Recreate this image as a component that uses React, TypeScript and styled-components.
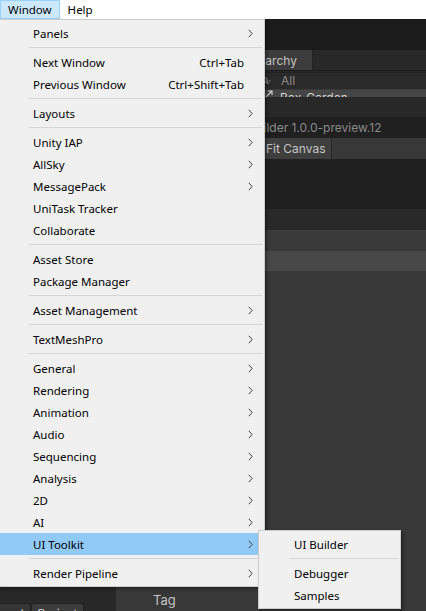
import React from 'react';
import styled, { createGlobalStyle } from 'styled-components';

const GlobalStyle = createGlobalStyle`
	html, body {
		margin: 0;
		padding: 0;
		background: #383838;
	}
	body {
		width: 426px;
		height: 611px;
		overflow: hidden;
	}
`;

const Screen = styled.div`
	position: relative;
	width: 426px;
	height: 611px;
	display: flex;
	flex-direction: column;
	overflow: hidden;
`;

/* ---------- native menu bar ---------- */

const MenuBar = styled.div`
	height: 19px;
	flex-shrink: 0;
	display: flex;
	background: #ffffff;
	font-family: 'Segoe UI', 'Noto Sans', sans-serif;
	font-size: 11.5px;
`;

const MenuBarItem = styled.div<{ $open?: boolean }>`
	box-sizing: border-box;
	height: 19px;
	padding: 0 7px;
	display: flex;
	align-items: center;
	color: #000;
	background: ${(p) => (p.$open ? '#cce8ff' : 'transparent')};
	border: 1px solid ${(p) => (p.$open ? '#99d1ff' : 'transparent')};
`;

/* ---------- editor behind the menu ---------- */

const Editor = styled.div`
	flex: 1;
	display: flex;
	flex-direction: column;
	min-height: 0;
	font-family: Inter, 'Noto Sans', sans-serif;
	font-size: 12px;
	color: #c4c4c4;
`;

const MainToolbar = styled.div`
	height: 31px;
	flex-shrink: 0;
	background: #1b1b1b;
`;

const Dock = styled.div`
	flex: 1;
	display: flex;
	min-height: 0;
`;

const ProjectDock = styled.div`
	width: 116px;
	flex-shrink: 0;
	background: #282828;
	display: flex;
	flex-direction: column;
	justify-content: flex-end;
`;

const DockTabs = styled.div`
	display: flex;
	height: 20px;
	margin-left: -17px;
	margin-bottom: -12px;
`;

const DockTab = styled.div<{ $active?: boolean }>`
	box-sizing: border-box;
	height: 20px;
	padding: 0 6px;
	display: flex;
	align-items: center;
	background: ${(p) => (p.$active ? '#3c3c3c' : '#353535')};
	border: 1px solid #232323;
	border-bottom: none;
	border-radius: 3px 3px 0 0;
	color: #c4c4c4;
`;

const RightDock = styled.div`
	flex: 1;
	display: flex;
	flex-direction: column;
	min-width: 0;
`;

const UpperSplit = styled.div`
	display: flex;
`;

const SceneGap = styled.div`
	width: 117px;
	flex-shrink: 0;
	background: #282828;
`;

const BuilderPanel = styled.div`
	flex: 1;
	display: flex;
	flex-direction: column;
	min-width: 0;
`;

const Band = styled.div<{ $h: number; $bg: string }>`
	box-sizing: border-box;
	height: ${(p) => p.$h}px;
	flex-shrink: 0;
	background: ${(p) => p.$bg};
	display: flex;
	align-items: center;
	white-space: nowrap;
	overflow: hidden;
`;

const TabRow = styled(Band)`
	align-items: stretch;
	border-bottom: 1px solid #1b1b1b;
`;

const PanelTab = styled.div`
	width: 80px;
	box-sizing: border-box;
	padding-left: 9px;
	display: flex;
	align-items: center;
	background: #3c3c3c;
	border-right: 1px solid #232323;
`;

const CreateButton = styled.div`
	width: 25px;
	flex-shrink: 0;
`;

const SearchField = styled.div`
	flex: 1;
	height: 16px;
	display: flex;
	align-items: center;
	gap: 10px;
	padding-left: 4px;
	background: #2a2a2a;
	border-top: 1px solid #212121;
	color: #8a8a8a;
`;

const TreeRow = styled(Band)`
	align-items: flex-start;
	padding-left: 32px;
	gap: 7px;
	line-height: 16px;
	color: #d4d4d4;
	border-top: 1px solid #3a3a3a;
`;

const TitleRow = styled(Band)`
	color: #8a8a8a;
`;

const BuilderToolbar = styled(Band)`
	align-items: stretch;
	padding-left: 27px;
`;

const ToolButton = styled.div`
	display: flex;
	align-items: center;
	padding: 0 6px;
	background: #3f3f3f;
	border-right: 1px solid #262626;
	color: #c4c4c4;
`;

const LowerArea = styled.div`
	flex: 1;
	background: #383838;
	display: flex;
	align-items: flex-end;
	padding-left: 37px;
`;

const TagLabel = styled.div`
	font-size: 13px;
	line-height: 16px;
	margin-bottom: 3px;
	color: #c4c4c4;
`;

/* ---------- drop-down menus ---------- */

const DropMenu = styled.div<{ $left: number; $top: number; $width: number }>`
	position: absolute;
	left: ${(p) => p.$left}px;
	top: ${(p) => p.$top}px;
	width: ${(p) => p.$width}px;
	box-sizing: border-box;
	padding: 2px;
	background: #f0f0f0;
	border: 1px solid #cccccc;
	box-shadow: 2px 2px 3px rgba(0, 0, 0, 0.35);
	font-family: 'Segoe UI', 'Noto Sans', sans-serif;
	font-size: 11.5px;
	color: #000;
	z-index: 2;
`;

const MenuRow = styled.div<{ $hot?: boolean }>`
	height: 22px;
	display: flex;
	align-items: center;
	padding-left: 33px;
	background: ${(p) => (p.$hot ? '#91c9f7' : 'transparent')};
	white-space: nowrap;
`;

const RowLabel = styled.span`
	flex: 1;
`;

const Shortcut = styled.span`
	padding-left: 16px;
`;

const ArrowCell = styled.span`
	width: 18px;
	height: 22px;
	flex-shrink: 0;
	box-sizing: border-box;
	padding-left: 4px;
	display: flex;
	align-items: center;
`;

const Separator = styled.div`
	height: 7px;
	display: flex;
	align-items: center;
	padding-left: 29px;

	&::after {
		content: '';
		flex: 1;
		height: 1px;
		background: #d5d5d5;
	}
`;

type Entry = { label?: string; shortcut?: string; sub?: boolean; hot?: boolean; sep?: boolean };

const windowMenu: Entry[] = [
	{ label: 'Panels', sub: true },
	{ sep: true },
	{ label: 'Next Window', shortcut: 'Ctrl+Tab' },
	{ label: 'Previous Window', shortcut: 'Ctrl+Shift+Tab' },
	{ sep: true },
	{ label: 'Layouts', sub: true },
	{ sep: true },
	{ label: 'Unity IAP', sub: true },
	{ label: 'AllSky', sub: true },
	{ label: 'MessagePack', sub: true },
	{ label: 'UniTask Tracker' },
	{ label: 'Collaborate' },
	{ sep: true },
	{ label: 'Asset Store' },
	{ label: 'Package Manager' },
	{ sep: true },
	{ label: 'Asset Management', sub: true },
	{ sep: true },
	{ label: 'TextMeshPro', sub: true },
	{ sep: true },
	{ label: 'General', sub: true },
	{ label: 'Rendering', sub: true },
	{ label: 'Animation', sub: true },
	{ label: 'Audio', sub: true },
	{ label: 'Sequencing', sub: true },
	{ label: 'Analysis', sub: true },
	{ label: '2D', sub: true },
	{ label: 'AI', sub: true },
	{ label: 'UI Toolkit', sub: true, hot: true },
	{ sep: true },
	{ label: 'Render Pipeline', sub: true },
];

const toolkitMenu: Entry[] = [
	{ label: 'UI Builder' },
	{ sep: true },
	{ label: 'Debugger' },
	{ label: 'Samples' },
];

const Chevron = () => (
	<svg width='5' height='9' viewBox='0 0 5 9'>
		<polyline points='0.8,0.8 4.2,4.5 0.8,8.2' fill='none' stroke='#404040' strokeWidth='1' />
	</svg>
);

const SearchGlyph = () => (
	<svg width='9' height='8' viewBox='0 0 9 8'>
		<circle cx='3' cy='3' r='2.2' fill='none' stroke='#9a9a9a' strokeWidth='1' />
		<line x1='4.6' y1='4.6' x2='6.5' y2='6.8' stroke='#9a9a9a' strokeWidth='1.2' />
		<polygon points='6.4,3.4 8.8,3.4 7.6,4.8' fill='#9a9a9a' />
	</svg>
);

const PrefabGlyph = () => (
	<svg width='8' height='8' viewBox='0 0 8 8'>
		<path d='M1 7 L7 1 M3 1 H7 V5' fill='none' stroke='#d4d4d4' strokeWidth='1.1' />
	</svg>
);

const MenuList = ({ entries }: { entries: Entry[] }) => (
	<>
		{entries.map((e, i) =>
			e.sep ? (
				<Separator key={i} />
			) : (
				<MenuRow key={i} $hot={e.hot}>
					<RowLabel>{e.label}</RowLabel>
					{e.shortcut && <Shortcut>{e.shortcut}</Shortcut>}
					<ArrowCell>{e.sub && <Chevron />}</ArrowCell>
				</MenuRow>
			)
		)}
	</>
);

const App = () => {
	return (
		<Screen>
			<GlobalStyle />
			<MenuBar>
				<MenuBarItem $open>Window</MenuBarItem>
				<MenuBarItem>Help</MenuBarItem>
			</MenuBar>

			<Editor>
				<MainToolbar />
				<Dock>
					<ProjectDock>
						<DockTabs>
							<DockTab>Board</DockTab>
							<DockTab $active>Project</DockTab>
						</DockTabs>
					</ProjectDock>
					<RightDock>
						<UpperSplit>
							<SceneGap />
							<BuilderPanel>
								<TabRow $h={21} $bg='#282828'>
									<PanelTab>Hierarchy</PanelTab>
								</TabRow>
								<Band $h={18} $bg='#282828'>
									<CreateButton />
									<SearchField>
										<SearchGlyph />
										<span>All</span>
									</SearchField>
								</Band>
								<TreeRow $h={8} $bg='#454545'>
									<PrefabGlyph />
									<span>Box_Garden</span>
								</TreeRow>
								<Band $h={20} $bg='#282828' />
								<TitleRow $h={21} $bg='#202020'>
									UI Builder 1.0.0-preview.12
								</TitleRow>
								<BuilderToolbar $h={21} $bg='#383838'>
									<ToolButton>Fit Canvas</ToolButton>
								</BuilderToolbar>
								<Band $h={50} $bg='#202020' />
								<Band $h={21} $bg='#292929' />
								<Band $h={21} $bg='#3a3a3a' />
								<Band $h={20} $bg='#484848' />
							</BuilderPanel>
						</UpperSplit>
						<LowerArea>
							<TagLabel>Tag</TagLabel>
						</LowerArea>
					</RightDock>
				</Dock>
			</Editor>

			<DropMenu $left={-3} $top={19} $width={268}>
				<MenuList entries={windowMenu} />
			</DropMenu>
			<DropMenu $left={258} $top={530} $width={143}>
				<MenuList entries={toolkitMenu} />
			</DropMenu>
		</Screen>
	);
};

export default App;
